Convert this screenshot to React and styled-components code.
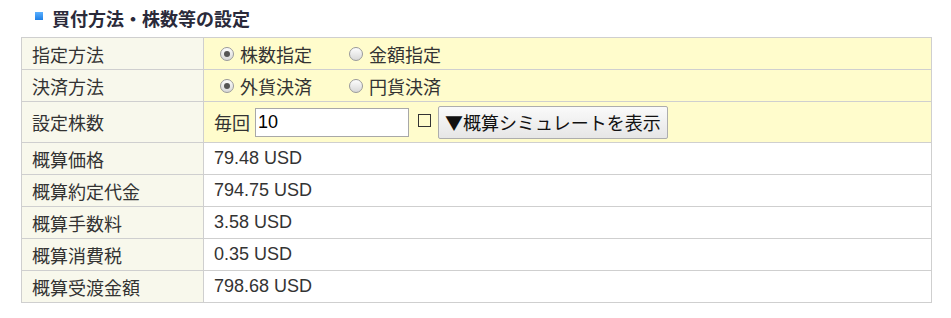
import React from "react";
import styled, { createGlobalStyle } from "styled-components";

const GlobalStyle = createGlobalStyle`
  body {
    margin: 0;
    background: #fff;
    font-family: "Liberation Sans", "Noto Sans CJK JP", sans-serif;
    color: #333;
  }
`;

const Page = styled.div`
  padding: 6px 19px 0 21px;
`;

const Heading = styled.h3`
  display: flex;
  align-items: center;
  gap: 9px;
  margin: 0 0 7px;
  padding-left: 14px;
  height: 24px;
  font-size: 18px;
  font-weight: bold;
  color: #2a2a3a;

  &::before {
    content: "";
    width: 8px;
    height: 8px;
    margin-top: -4px;
    background: linear-gradient(#5ab0ff, #1e7fe6);
  }
`;

const Table = styled.table`
  width: 911px;
  border-collapse: collapse;
  font-size: 18px;
`;

const Row = styled.tr`
  height: ${(p) => (p.$tall ? 41 : 32)}px;
`;

const Label = styled.th`
  width: 161px;
  padding: 0 10px;
  text-align: left;
  font-weight: normal;
  background: #f8f8ec;
  border: 1px solid #cfcfcf;
`;

const Value = styled.td`
  padding: 0 10px;
  background: ${(p) => (p.$input ? "#fffccc" : "#fff")};
  border: 1px solid #cfcfcf;
`;

const Options = styled.div`
  display: flex;
  align-items: center;
  gap: 37px;
  padding-left: 6px;
`;

const RadioLabel = styled.label`
  display: flex;
  align-items: center;
  gap: 6px;
`;

const Radio = styled.span`
  position: relative;
  width: 12px;
  height: 12px;
  border-radius: 50%;
  border: 1px solid #9a9a9a;
  background: linear-gradient(#fdfdfd, #d8d8d8);

  &::after {
    content: "";
    display: ${(p) => (p.$checked ? "block" : "none")};
    position: absolute;
    left: 3px;
    top: 3px;
    width: 6px;
    height: 6px;
    border-radius: 50%;
    background: #555;
  }
`;

const Controls = styled.div`
  display: flex;
  align-items: center;
`;

const Unit = styled.span`
  margin-right: 5px;
`;

const Quantity = styled.input`
  box-sizing: border-box;
  width: 154px;
  height: 29px;
  padding: 0 2px;
  border: 1px solid #a8a8a8;
  font: inherit;
  font-size: 18px;
  color: #000;
  outline: none;
`;

const Square = styled.span`
  width: 11px;
  height: 11px;
  margin: -4px 7px 0 9px;
  border: 1px solid #333;
`;

const SimButton = styled.button`
  height: 33px;
  padding: 0 6px;
  border: 1px solid #adadad;
  border-radius: 2px;
  background: linear-gradient(#fafafa, #e6e6e6);
  font: inherit;
  font-size: 18px;
  color: #111;
`;

const Arrow = styled.span`
  font-family: "Noto Sans CJK JP", sans-serif;
`;

const results = [
  ["概算価格", "79.48 USD"],
  ["概算約定代金", "794.75 USD"],
  ["概算手数料", "3.58 USD"],
  ["概算消費税", "0.35 USD"],
  ["概算受渡金額", "798.68 USD"],
];

function RadioGroup({ options }) {
  return (
    <Options>
      {options.map((o, i) => (
        <RadioLabel key={o}>
          <Radio $checked={i === 0} />
          {o}
        </RadioLabel>
      ))}
    </Options>
  );
}

export default function App() {
  return (
    <Page>
      <GlobalStyle />
      <Heading>買付方法・株数等の設定</Heading>
      <Table>
        <tbody>
          <Row>
            <Label>指定方法</Label>
            <Value $input>
              <RadioGroup options={["株数指定", "金額指定"]} />
            </Value>
          </Row>
          <Row>
            <Label>決済方法</Label>
            <Value $input>
              <RadioGroup options={["外貨決済", "円貨決済"]} />
            </Value>
          </Row>
          <Row $tall>
            <Label>設定株数</Label>
            <Value $input>
              <Controls>
                <Unit>毎回</Unit>
                <Quantity defaultValue="10" />
                <Square />
                <SimButton>
                  <Arrow>▼</Arrow>概算シミュレートを表示
                </SimButton>
              </Controls>
            </Value>
          </Row>
          {results.map(([k, v]) => (
            <Row key={k}>
              <Label>{k}</Label>
              <Value>{v}</Value>
            </Row>
          ))}
        </tbody>
      </Table>
    </Page>
  );
}
